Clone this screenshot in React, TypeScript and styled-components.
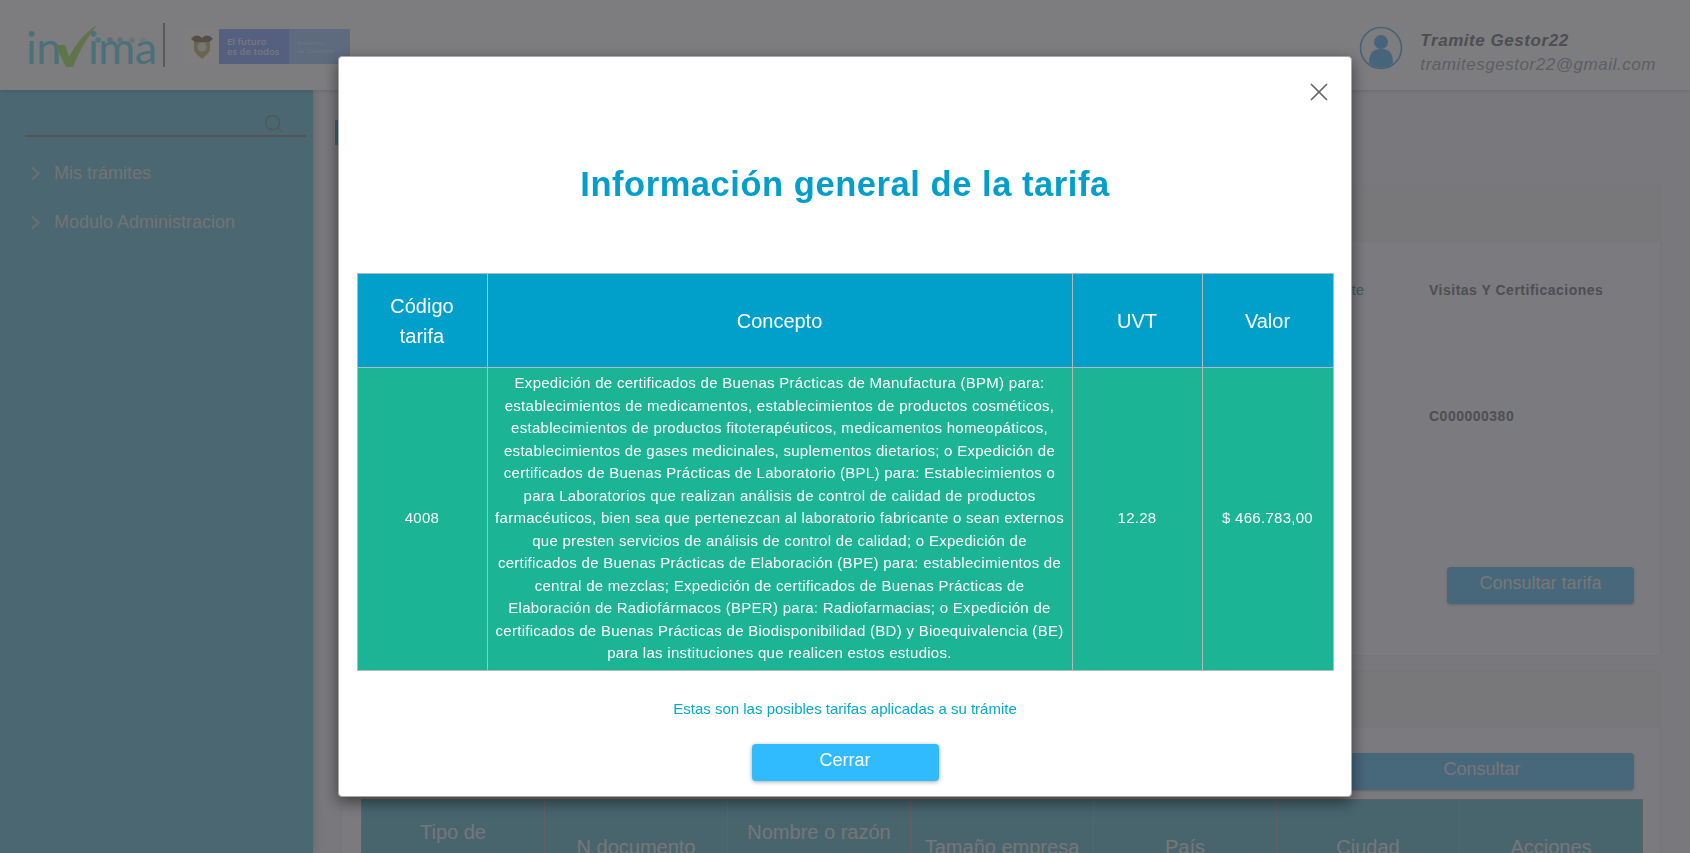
import styled, { createGlobalStyle } from "styled-components";
import { Search, X } from "lucide-react";

const GlobalStyle = createGlobalStyle`
  html, body {
    margin: 0;
    height: 853px;
    overflow: hidden;
    background: #f3f2fa;
    font-family: "Liberation Sans", Arial, sans-serif;
  }
  * { box-sizing: border-box; }
`;

const Page = styled.div`
  height: 853px;
  display: flex;
  flex-direction: column;
  overflow: hidden;
`;

const Header = styled.header`
  height: 90px;
  flex: none;
  background: #fafaff;
  box-shadow: 0 1px 4px rgba(0, 0, 0, 0.12);
  display: flex;
  align-items: center;
  padding: 0 34px 0 26px;
  position: relative;
  z-index: 2;
`;

const InvimaLogo = styled.div`
  display: flex;
  align-items: baseline;
  height: 46px;
  width: 130px;
  flex: none;
  margin-top: -2px;
  position: relative;
`;

const LogoLetters = styled.span<{ $gap?: number }>`
  font-family: "Lato", sans-serif;
  font-weight: 400;
  font-size: 45px;
  line-height: 52px;
  letter-spacing: -0.5px;
  margin-left: ${(p) => p.$gap ?? 0}px;
  color: #94e2f4;
`;

const LogoDrawing = styled.svg`
  position: absolute;
  left: 26px;
  top: -2px;
`;

const LogoDivider = styled.span`
  width: 2px;
  height: 44px;
  flex: none;
  margin: 0 19px 0 7px;
  background: #b4b4b8;
`;

const Gov = styled.div`
  display: flex;
  width: 166px;
  height: 35px;
  margin-top: 3px;
`;

const GovShield = styled.div`
  width: 35px;
  background: #fdfdff;
  display: flex;
  align-items: center;
  justify-content: center;
`;

const GovBlock = styled.div<{ $tone: string; $width: number }>`
  width: ${(p) => p.$width}px;
  background: ${(p) => p.$tone};
  display: flex;
  flex-direction: column;
  justify-content: center;
  padding-left: 8px;
  color: #eef0fa;
`;

const GovBig = styled.span`
  font-family: "Open Sans", sans-serif;
  font-size: 9.5px;
  font-weight: 600;
  line-height: 10px;
  white-space: nowrap;
`;

const GovSmall = styled.span`
  font-size: 6px;
  line-height: 8px;
  letter-spacing: 0.3px;
  white-space: nowrap;
  opacity: 0.75;
`;

const UserBox = styled.div`
  margin-left: auto;
  display: flex;
  align-items: center;
  gap: 17px;
`;

const Avatar = styled.svg`
  margin-top: 5px;
`;

const UserText = styled.div`
  display: flex;
  flex-direction: column;
  font-style: italic;
  font-size: 17px;
  line-height: 24px;
  margin-top: 16px;
`;

const UserName = styled.span`
  font-weight: bold;
  color: #9a9aa4;
  letter-spacing: 0.55px;
`;

const UserMail = styled.span`
  color: #bcbcc6;
  letter-spacing: 0.55px;
`;

const Body = styled.div`
  flex: 1;
  display: flex;
  min-height: 0;
`;

const Sidebar = styled.aside`
  width: 313px;
  flex: none;
  background: #94cee4;
  padding: 23px 7px 0 25px;
  box-shadow: 2px 0 8px rgba(0, 0, 0, 0.15);
`;

const SearchRow = styled.div`
  height: 24px;
  border-bottom: 2px solid #a8a8b0;
  display: flex;
  justify-content: flex-end;
  padding-right: 22px;
  color: #aaaab2;
`;

const MenuList = styled.ul`
  list-style: none;
  margin: 12px 0 0;
  padding: 0;
`;

const MenuItem = styled.li`
  height: 49px;
  display: flex;
  align-items: center;
  gap: 13px;
  font-size: 18px;
  color: #e8e6e8;
  padding-left: 5px;
`;

const Main = styled.main`
  flex: 1;
  min-width: 0;
  padding: 30px 30px 0 29px;
`;

const TitleMark = styled.div`
  width: 6px;
  height: 25px;
  margin-left: -7px;
  background: #6ccce8;
`;

const Card = styled.section<{ $height?: number; $top: number }>`
  background: #f6f4fd;
  box-shadow: 0 0 3px rgba(0, 0, 0, 0.06);
  margin-top: ${(p) => p.$top}px;
  ${(p) => (p.$height ? `height: ${p.$height}px;` : "")}
`;

const CardTop = styled.div`
  height: 56px;
  background: #f0f0f6;
`;

const CardBody = styled.div`
  padding: 38px 26px 0 17px;
`;

const InfoRow = styled.div<{ $height: number }>`
  display: flex;
  justify-content: flex-end;
  gap: 65px;
  padding-right: 29px;
  height: ${(p) => p.$height}px;
`;

const InfoLabel = styled.span`
  color: #6cc0d4;
  font-size: 15px;
  line-height: 20px;
`;

const InfoStrong = styled.span`
  width: 176px;
  font-size: 14px;
  line-height: 20px;
  font-weight: bold;
  letter-spacing: 0.5px;
  white-space: nowrap;
  color: #9c9ca6;
`;

const ButtonRow = styled.div<{ $inset?: number }>`
  display: flex;
  justify-content: flex-end;
  padding-right: ${(p) => p.$inset ?? 0}px;
`;

const GhostButton = styled.button<{ $width: number }>`
  width: ${(p) => p.$width}px;
  height: 37px;
  border: 0;
  border-radius: 4px;
  background: #8ecef4;
  color: #eeeef2;
  font: 18px "Liberation Sans", Arial, sans-serif;
  padding: 0 0 4px;
  box-shadow: 0 1px 3px rgba(0, 0, 0, 0.18);
`;

const ResultBody = styled.div`
  padding: 25px 17px 0 19px;
`;

const ResultTable = styled.table`
  width: 100%;
  margin-top: 9px;
  border-collapse: collapse;
  table-layout: fixed;
  background: #90cadc;
  border: 1px solid #c2c2ca;

  th {
    height: 94px;
    border-left: 1px solid #c2c2ca;
    font-size: 20px;
    line-height: 30px;
    font-weight: normal;
    color: #eeecf0;
    text-align: center;
    vertical-align: middle;
    padding: 0 10px;
  }
`;

const Overlay = styled.div`
  position: fixed;
  inset: 0;
  z-index: 10;
  background: rgba(0, 0, 0, 0.5);
  display: flex;
  justify-content: center;
  align-items: flex-start;
  padding-top: 56px;
`;

const Modal = styled.div`
  width: 1014px;
  height: 741px;
  background: #fff;
  border: 1px solid #a9a9a9;
  border-radius: 4px;
  box-shadow: 0 5px 15px rgba(0, 0, 0, 0.5);
  padding: 0 18px 0 18px;
  display: flex;
  flex-direction: column;
  align-items: center;
`;

const CloseRow = styled.div`
  align-self: stretch;
  height: 70px;
  margin-right: -1px;
  display: flex;
  justify-content: flex-end;
  padding-top: 20px;
  color: #666;
`;

const ModalTitle = styled.h2`
  margin: 29px 0 0;
  font-size: 34.5px;
  line-height: 56px;
  height: 117px;
  font-weight: bold;
  letter-spacing: 0.55px;
  color: #039ecb;
  text-align: center;
`;

const TariffTable = styled.table`
  width: 976px;
  flex: none;
  border-collapse: collapse;
  table-layout: fixed;
  color: #fff;
  text-align: center;

  th,
  td {
    border: 1px solid #b4b9bc;
    vertical-align: middle;
  }

  th {
    height: 94px;
    background: #00a0cb;
    font-size: 20px;
    line-height: 30px;
    font-weight: normal;
    padding: 0 10px;
  }

  td {
    background: #1bb595;
    font-size: 15px;
    line-height: 22.5px;
    letter-spacing: 0.28px;
    padding: 4px 2px 5px;
  }
`;

const ConceptLine = styled.span`
  display: block;
  white-space: nowrap;
`;

const Note = styled.p`
  margin: 28px 0 0;
  font-size: 15px;
  line-height: 20px;
  color: #05aacb;
`;

const CloseButton = styled.button`
  width: 187px;
  height: 37px;
  margin-top: 25px;
  border: 0;
  border-radius: 4px;
  background: #30bbff;
  color: #fff;
  font: 18px "Liberation Sans", Arial, sans-serif;
  padding: 0 0 4px;
  box-shadow: 0 1px 4px rgba(0, 0, 0, 0.35);
`;

const Chevron = () => (
  <svg width="11" height="15" viewBox="0 0 11 15">
    <path d="M2 1.5 L8.5 7.5 L2 13.5" fill="none" stroke="#dcdce2" strokeWidth="2.2" />
  </svg>
);

const conceptLines = [
  "Expedición de certificados de Buenas Prácticas de Manufactura (BPM) para:",
  "establecimientos de medicamentos, establecimientos de productos cosméticos,",
  "establecimientos de productos fitoterapéuticos, medicamentos homeopáticos,",
  "establecimientos de gases medicinales, suplementos dietarios; o Expedición de",
  "certificados de Buenas Prácticas de Laboratorio (BPL) para: Establecimientos o",
  "para Laboratorios que realizan análisis de control de calidad de productos",
  "farmacéuticos, bien sea que pertenezcan al laboratorio fabricante o sean externos",
  "que presten servicios de análisis de control de calidad; o Expedición de",
  "certificados de Buenas Prácticas de Elaboración (BPE) para: establecimientos de",
  "central de mezclas; Expedición de certificados de Buenas Prácticas de",
  "Elaboración de Radiofármacos (BPER) para: Radiofarmacias; o Expedición de",
  "certificados de Buenas Prácticas de Biodisponibilidad (BD) y Bioequivalencia (BE)",
  "para las instituciones que realicen estos estudios.",
];

const resultColumns = ["Tipo de documento", "N documento", "Nombre o razón social", "Tamaño empresa", "País", "Ciudad", "Acciones"];

export default function App() {
  return (
    <>
      <GlobalStyle />
      <Page>
        <Header>
          <InvimaLogo>
            <LogoLetters>in</LogoLetters>
            <LogoLetters $gap={27}>ima</LogoLetters>
            <LogoDrawing width="96" height="50" viewBox="0 0 96 50">
              <path d="M3 26 L13 26 L17 38 C24 24 33 14 45 6 C36 18 27 32 21 48 L14 48 Z" fill="#c0e898" />
              <circle cx="46" cy="21" r="2.8" fill="#a4e8f8" />
              <circle cx="58" cy="21" r="2.8" fill="#b0e0ec" />
              <circle cx="68" cy="21" r="2.8" fill="#c0e0e8" />
              <circle cx="80" cy="21" r="2.8" fill="#d4e6ec" />
              <circle cx="91" cy="21" r="2.8" fill="#e0ecf0" />
            </LogoDrawing>
          </InvimaLogo>
          <LogoDivider />
          <Gov>
            <GovShield>
              <svg width="24" height="26" viewBox="0 0 24 26">
                <path d="M1 5 C5 0 9 1 12 4 C15 1 19 0 23 5 L19 8 H5 Z" fill="#a89c90" />
                <path d="M4 8 H20 V15 C20 19 16 21 12 25 C8 21 4 19 4 15 Z" fill="#d8c898" />
                <circle cx="12" cy="13" r="4.5" fill="#eeeef2" />
              </svg>
            </GovShield>
            <GovBlock $tone="#aabeff" $width={70}>
              <GovBig>El futuro</GovBig>
              <GovBig>es de todos</GovBig>
            </GovBlock>
            <GovBlock $tone="#bcd6ff" $width={61}>
              <GovSmall>Gobierno</GovSmall>
              <GovSmall>de Colombia</GovSmall>
            </GovBlock>
          </Gov>
          <UserBox>
            <Avatar width="44" height="44" viewBox="0 0 44 44">
              <circle cx="22" cy="22" r="20.5" fill="none" stroke="#88c4ec" strokeWidth="1.6" />
              <circle cx="22" cy="16" r="7" fill="#8ccaf4" />
              <path d="M10 37 C10 27 14 23 22 23 C30 23 34 27 34 37 C30 43 14 43 10 37 Z" fill="#8ccaf4" />
            </Avatar>
            <UserText>
              <UserName>Tramite Gestor22</UserName>
              <UserMail>tramitesgestor22@gmail.com</UserMail>
            </UserText>
          </UserBox>
        </Header>
        <Body>
          <Sidebar>
            <SearchRow>
              <Search size={21} strokeWidth={1.5} />
            </SearchRow>
            <MenuList>
              <MenuItem>
                <Chevron />
                Mis trámites
              </MenuItem>
              <MenuItem>
                <Chevron />
                Modulo Administracion
              </MenuItem>
            </MenuList>
          </Sidebar>
          <Main>
            <TitleMark />
            <Card $height={469} $top={41}>
              <CardTop />
              <CardBody>
                <InfoRow $height={126}>
                  <InfoLabel>Tipo de trámite</InfoLabel>
                  <InfoStrong>Visitas Y Certificaciones</InfoStrong>
                </InfoRow>
                <InfoRow $height={161}>
                  <InfoStrong>C000000380</InfoStrong>
                </InfoRow>
                <ButtonRow>
                  <GhostButton $width={187}>Consultar tarifa</GhostButton>
                </ButtonRow>
              </CardBody>
            </Card>
            <Card $top={17}>
              <CardTop />
              <ResultBody>
                <ButtonRow $inset={9}>
                  <GhostButton $width={304}>Consultar</GhostButton>
                </ButtonRow>
                <ResultTable>
                  <thead>
                    <tr>
                      {resultColumns.map((name) => (
                        <th key={name}>{name}</th>
                      ))}
                    </tr>
                  </thead>
                </ResultTable>
              </ResultBody>
            </Card>
          </Main>
        </Body>
      </Page>
      <Overlay>
        <Modal>
          <CloseRow>
            <X size={30} strokeWidth={1.4} />
          </CloseRow>
          <ModalTitle>Información general de la tarifa</ModalTitle>
          <TariffTable>
            <colgroup>
              <col style={{ width: 130 }} />
              <col style={{ width: 585 }} />
              <col style={{ width: 130 }} />
              <col style={{ width: 131 }} />
            </colgroup>
            <thead>
              <tr>
                <th>Código tarifa</th>
                <th>Concepto</th>
                <th>UVT</th>
                <th>Valor</th>
              </tr>
            </thead>
            <tbody>
              <tr>
                <td>4008</td>
                <td>
                  {conceptLines.map((line) => (
                    <ConceptLine key={line}>{line}</ConceptLine>
                  ))}
                </td>
                <td>12.28</td>
                <td>$ 466.783,00</td>
              </tr>
            </tbody>
          </TariffTable>
          <Note>Estas son las posibles tarifas aplicadas a su trámite</Note>
          <CloseButton>Cerrar</CloseButton>
        </Modal>
      </Overlay>
    </>
  );
}
